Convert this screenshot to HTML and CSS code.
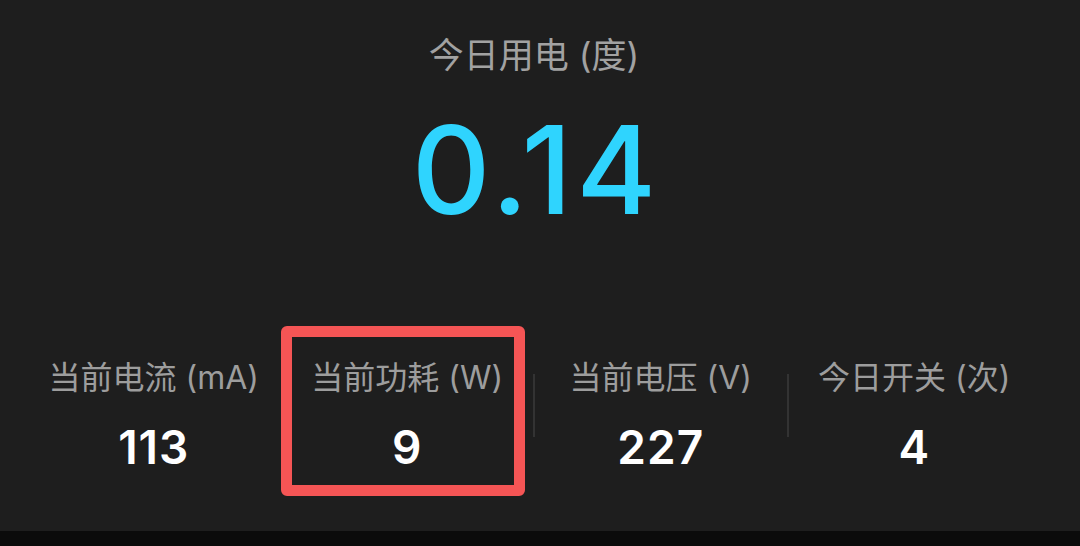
FILE: index.html
```html
<!DOCTYPE html>
<html lang="zh-CN">
<head>
<meta charset="utf-8">
<title>今日用电</title>
<link rel="stylesheet" href="styles.css">
</head>
<body>
<main class="card">
  <div class="title">今日用电 (度)</div>
  <div class="big">0.14</div>
  <section class="stats">
    <div class="stat">
      <div class="label">当前电流 (mA)</div>
      <div class="value">113</div>
    </div>
    <div class="divider hidden"></div>
    <div class="stat highlighted">
      <div class="label">当前功耗 (W)</div>
      <div class="value">9</div>
      <div class="mark"></div>
    </div>
    <div class="divider"></div>
    <div class="stat">
      <div class="label">当前电压 (V)</div>
      <div class="value">227</div>
    </div>
    <div class="divider"></div>
    <div class="stat">
      <div class="label">今日开关 (次)</div>
      <div class="value">4</div>
    </div>
  </section>
</main>
<div class="bottom"></div>
</body>
</html>
```
FILE: styles.css
```css
html, body {
  margin: 0;
  padding: 0;
  background: #0b0b0b;
}
body {
  width: 1080px;
  height: 546px;
  overflow: hidden;
  font-family: Inter, "Noto Sans CJK SC", sans-serif;
}
.card {
  height: 531px;
  box-sizing: border-box;
  background: #1e1e1e;
  padding: 35px 40px 0 28px;
  display: flex;
  flex-direction: column;
  align-items: center;
}
.title {
  font-size: 35px;
  line-height: 40px;
  color: #a2a2a2;
}
.big {
  margin-top: 34px;
  font-size: 122px;
  line-height: 121px;
  letter-spacing: 4px;
  margin-right: -4px;
  color: #2fd4fe;
  font-weight: 500;
}
.stats {
  margin-top: 128px;
  width: 100%;
  display: flex;
  align-items: center;
}
.stat {
  flex: 1;
  display: flex;
  flex-direction: column;
  align-items: center;
  position: relative;
}
.label {
  font-size: 32px;
  line-height: 40px;
  color: #9d9d9d;
}
.value {
  margin-top: 23px;
  font-size: 46px;
  line-height: 52px;
  font-weight: 600;
  letter-spacing: 1px;
  color: #ffffff;
}
.divider {
  width: 2px;
  height: 63px;
  background: #333333;
  align-self: flex-start;
  margin-top: 16px;
}
.divider.hidden {
  visibility: hidden;
}
.mark {
  position: absolute;
  top: -32px;
  bottom: -23px;
  left: -1px;
  right: 8px;
  border: 11px solid #f55555;
  border-radius: 6px;
}
.bottom {
  height: 15px;
  background: #0b0b0b;
}
```
